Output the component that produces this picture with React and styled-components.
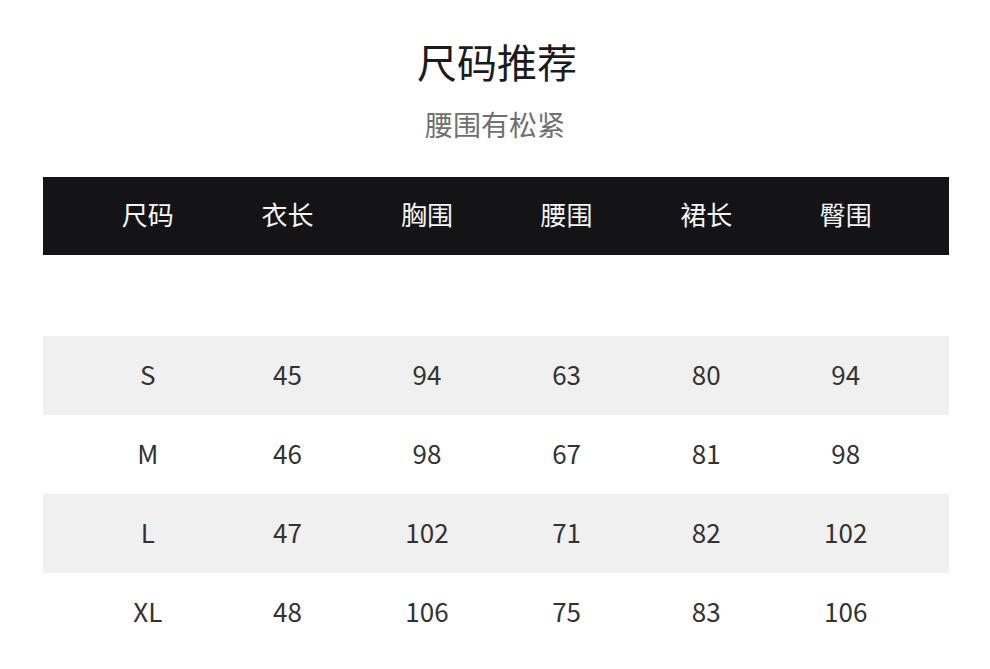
import React from "react";
import styled, { createGlobalStyle } from "styled-components";

const GlobalStyle = createGlobalStyle`
  body {
    margin: 0;
    background: #ffffff;
    font-family: "Noto Sans CJK SC", "Noto Sans", sans-serif;
  }
`;

const Page = styled.div`
  width: 990px;
  height: 669px;
  overflow: hidden;
  padding-top: 35px;
  box-sizing: border-box;
`;

const Title = styled.h1`
  margin: 0;
  text-align: center;
  font-size: 40px;
  font-weight: 400;
  line-height: 52px;
  color: #1b1b1b;
  padding-left: 4px;
`;

const Subtitle = styled.div`
  margin-top: 19px;
  text-align: center;
  font-size: 28px;
  line-height: 36px;
  color: #707070;
`;

const Table = styled.div`
  margin: 35px 41px 0 43px;
`;

const Row = styled.div`
  display: grid;
  grid-template-columns: repeat(6, 139.6px);
  padding: 0 0 ${(p) => p.lift}px 35px;
  box-sizing: border-box;
  height: ${(p) => p.h}px;
  align-items: center;
  background: ${(p) => p.bg};
  color: ${(p) => p.fg};
  font-size: ${(p) => p.size}px;
`;

const Spacer = styled.div`
  height: 81px;
`;

const Cell = styled.div`
  text-align: center;
  line-height: 1;
`;

const headers = ["尺码", "衣长", "胸围", "腰围", "裙长", "臀围"];
const rows = [
  ["S", "45", "94", "63", "80", "94"],
  ["M", "46", "98", "67", "81", "98"],
  ["L", "47", "102", "71", "82", "102"],
  ["XL", "48", "106", "75", "83", "106"],
];

export default function App() {
  return (
    <Page>
      <GlobalStyle />
      <Title>尺码推荐</Title>
      <Subtitle>腰围有松紧</Subtitle>
      <Table>
        <Row h={78} lift={5} bg="#141417" fg="#f4f4f4" size={26}>
          {headers.map((h) => (
            <Cell key={h}>{h}</Cell>
          ))}
        </Row>
        <Spacer />
        {rows.map((r, i) => (
          <Row
            key={r[0]}
            h={79}
            lift={4}
            bg={i % 2 === 0 ? "#f0f0f0" : "#ffffff"}
            fg="#333333"
            size={26}
          >
            {r.map((v, j) => (
              <Cell key={j}>{v}</Cell>
            ))}
          </Row>
        ))}
      </Table>
    </Page>
  );
}
